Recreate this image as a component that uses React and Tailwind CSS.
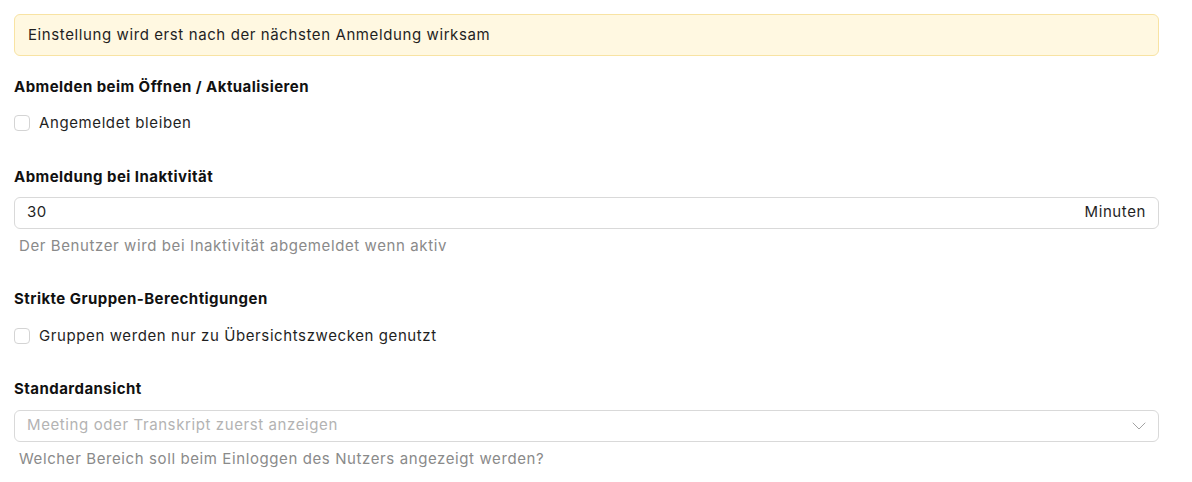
import { ChevronDown } from "lucide-react";

function Checkbox({ label }) {
  return (
    <label className="flex items-center gap-[9px] text-[15px] tracking-[0.6px] text-[#1f1f1f]">
      <span className="w-4 h-4 rounded-[4px] border border-[#d4d4d4] bg-white" />
      {label}
    </label>
  );
}

function Label({ children }) {
  return (
    <h3 className="text-[15px] font-bold tracking-[0.45px] text-[#111] leading-5">
      {children}
    </h3>
  );
}

export default function App() {
  return (
    <div
      className="bg-white px-[14px] pt-[14px] w-[1173px]"
      style={{ fontFamily: "Inter, 'Noto Sans', sans-serif" }}
    >
      <div className="h-[42px] rounded-md border border-[#f8e3a3] bg-[#fff8e1] px-[13px] flex items-center text-[15px] tracking-[0.6px] text-[#1f1f1f]">
        Einstellung wird erst nach der nächsten Anmeldung wirksam
      </div>

      <div className="mt-[21px]">
        <Label>Abmelden beim Öffnen / Aktualisieren</Label>
        <div className="mt-[15px]">
          <Checkbox label="Angemeldet bleiben" />
        </div>
      </div>

      <div className="mt-[32px]">
        <Label>Abmeldung bei Inaktivität</Label>
        <div className="mt-[10px] h-[32px] rounded-md border border-[#d9d9d9] flex items-center justify-between px-3 text-[15px] tracking-[0.6px] text-[#1f1f1f]">
          <span>30</span>
          <span>Minuten</span>
        </div>
        <p className="mt-[6px] ml-[5px] text-[15px] tracking-[0.6px] text-[#8a8a8a]">
          Der Benutzer wird bei Inaktivität abgemeldet wenn aktiv
        </p>
      </div>

      <div className="mt-[32px]">
        <Label>Strikte Gruppen-Berechtigungen</Label>
        <div className="mt-[16px]">
          <Checkbox label="Gruppen werden nur zu Übersichtszwecken genutzt" />
        </div>
      </div>

      <div className="mt-[31px]">
        <Label>Standardansicht</Label>
        <div className="mt-[11px] h-[32px] rounded-md border border-[#d9d9d9] flex items-center justify-between pl-3 pr-[7px] text-[15px] tracking-[0.6px] text-[#b3b3b3]">
          <span>Meeting oder Transkript zuerst anzeigen</span>
          <ChevronDown className="w-6 h-6 text-[#a3a3a3]" strokeWidth={1} />
        </div>
        <p className="mt-[6px] ml-[5px] text-[15px] tracking-[0.6px] text-[#8a8a8a]">
          Welcher Bereich soll beim Einloggen des Nutzers angezeigt werden?
        </p>
      </div>
    </div>
  );
}
